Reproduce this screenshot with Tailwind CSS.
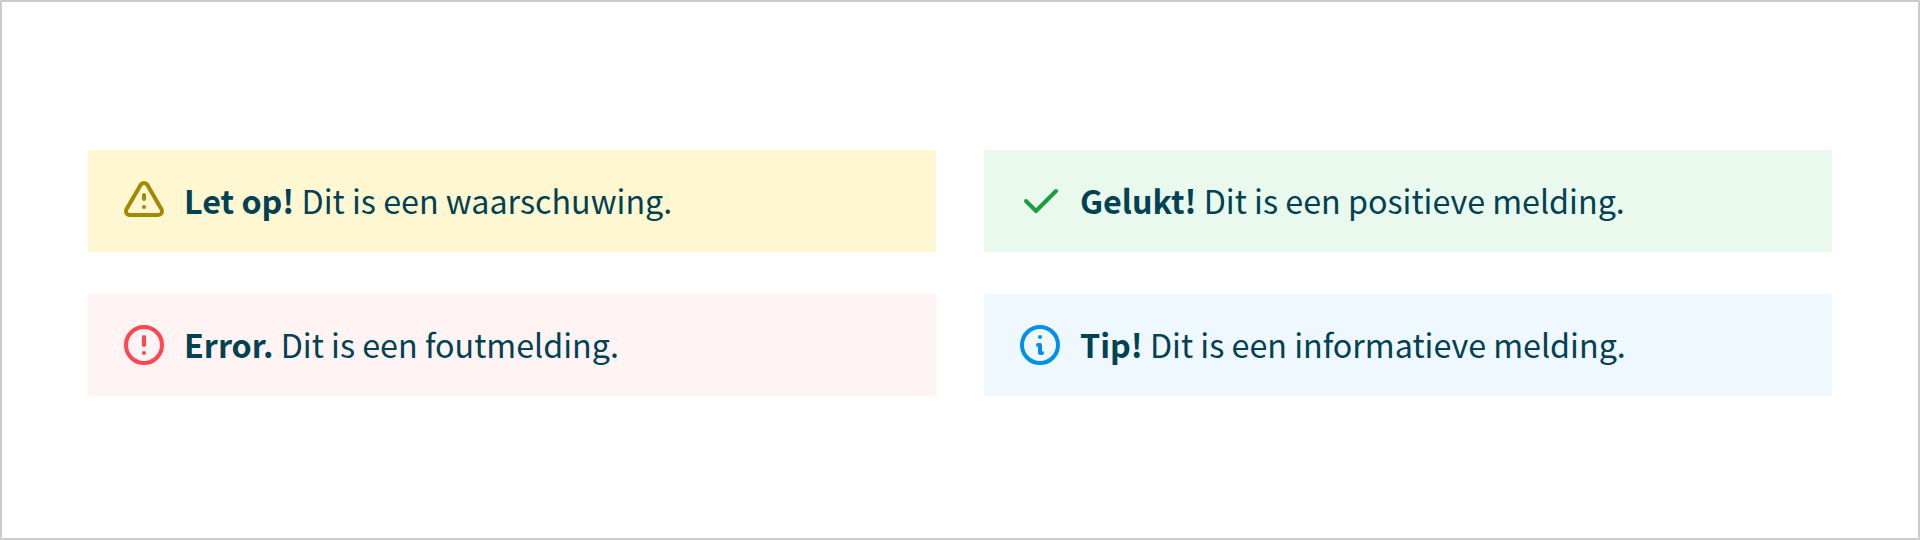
<!DOCTYPE html>
<html lang="nl">
<head>
<meta charset="utf-8">
<title>Meldingen</title>
<script src="https://cdn.jsdelivr.net/npm/@tailwindcss/browser@4"></script>
</head>
<body class="bg-white">
<main class="h-[540px] w-[1920px] border-2 border-[#cccccc] px-[86px] pt-[148px] font-['Noto_Sans_CJK_SC',sans-serif] text-[32.25px] leading-[54px] text-[#004152]">
  <div class="grid grid-cols-2 gap-x-12 gap-y-[42px]">
    <div class="flex h-[102px] items-center gap-4 bg-[#fff7d1] px-8">
      <svg class="size-12 shrink-0 text-[#a18a00]" viewBox="0 0 48 48" fill="none" stroke="currentColor" stroke-width="4" stroke-linecap="round" stroke-linejoin="round"><path d="M20.6 7.9 6.5 32.2A3.8 3.8 0 0 0 9.8 38H38.2A3.8 3.8 0 0 0 41.5 32.2L27.4 7.9A4 4 0 0 0 20.6 7.9Z"/><path d="M24 18v4M24 30h.01"/></svg>
      <p class="pb-0.5 whitespace-nowrap"><strong class="font-bold">Let op!</strong> Dit is een waarschuwing.</p>
    </div>
    <div class="flex h-[102px] items-center gap-4 bg-[#e9f9ee] px-8">
      <svg class="size-12 shrink-0 text-[#1b9e3e]" viewBox="0 0 48 48" fill="none" stroke="currentColor" stroke-width="4" stroke-linecap="round" stroke-linejoin="round"><path d="m10 24 10 10 20-20"/></svg>
      <p class="pb-0.5 whitespace-nowrap"><strong class="font-bold">Gelukt!</strong> Dit is een positieve melding.</p>
    </div>
    <div class="flex h-[102px] items-center gap-4 bg-[#fff4f3] px-8">
      <svg class="size-12 shrink-0 text-[#ff4651]" viewBox="0 0 48 48" fill="none" stroke="currentColor" stroke-width="4" stroke-linecap="round" stroke-linejoin="round"><circle cx="24" cy="24" r="18"/><path d="M24 16v8M24 32h.01"/></svg>
      <p class="pb-0.5 whitespace-nowrap"><strong class="font-bold">Error.</strong> Dit is een foutmelding.</p>
    </div>
    <div class="flex h-[102px] items-center gap-4 bg-[#eff7ff] px-8">
      <svg class="size-12 shrink-0 text-[#0090ea]" viewBox="0 0 48 48" fill="none" stroke="currentColor" stroke-width="4" stroke-linecap="round" stroke-linejoin="round"><circle cx="24" cy="24" r="18"/><path d="M22 24h2v8h2M24 16h.01"/></svg>
      <p class="pb-0.5 whitespace-nowrap"><strong class="font-bold">Tip!</strong> Dit is een informatieve melding.</p>
    </div>
  </div>
</main>
</body>
</html>
